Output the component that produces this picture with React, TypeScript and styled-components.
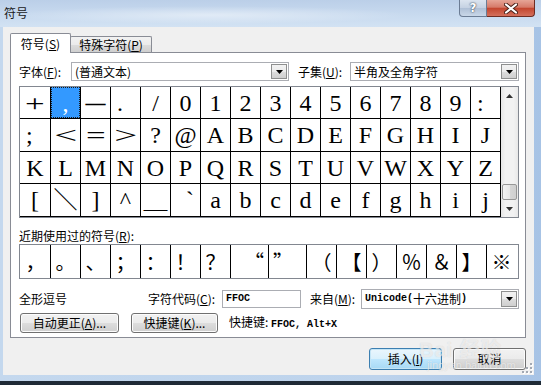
import type { ReactNode } from "react";
import styled, { createGlobalStyle } from "styled-components";

type Align = "left" | "center" | "right";

const gridRows: string[][] = [
  ["+", ",", "—", ".", "/", ..."0123456789".split(""), ":"],
  [";", "<", "=", ">", "?", "@", ..."ABCDEFGHIJ".split("")],
  "KLMNOPQRSTUVWXYZ".split(""),
  ["[", "＼", "]", "^", "＿", "`", ..."abcdefghij".split("")],
];

const leftChars = [".", ":", ";"];
const rightChars = ["`"];
// full-width look for a few half-width glyphs
const stretch: Record<string, number> = { "+": 1.45, "<": 1.7, "=": 1.45, ">": 1.7 };

const recent: { ch: string; align?: Align }[] = [
  { ch: "，" },
  { ch: "。" },
  { ch: "、" },
  { ch: "；" },
  { ch: "：" },
  { ch: "！" },
  { ch: "？" },
  { ch: "“", align: "right" },
  { ch: "”", align: "left" },
  { ch: "（" },
  { ch: "【" },
  { ch: "）" },
  { ch: "％" },
  { ch: "＆" },
  { ch: "】" },
  { ch: "※" },
];

const alignOf = (ch: string): Align =>
  leftChars.includes(ch) ? "left" : rightChars.includes(ch) ? "right" : "center";

export default function App() {
  return (
    <>
      <GlobalStyle />
      <Window>
        <TitleBar>
          <TitleText>符号</TitleText>
          <CaptionButtons>
            <HelpButton>?</HelpButton>
            <CloseButton>
              <svg width="14" height="11" viewBox="0 0 14 11">
                <path d="M2 1.5l10 8M12 1.5l-10 8" stroke="#4a2119" strokeWidth="4" strokeLinecap="round" />
                <path d="M2 1.5l10 8M12 1.5l-10 8" stroke="#fff" strokeWidth="2.2" strokeLinecap="round" />
              </svg>
            </CloseButton>
          </CaptionButtons>
        </TitleBar>

        <Body>
          <Client>
            <TabRow>
              <Tab $active>
                符号(<u>S</u>)
              </Tab>
              <Tab>
                特殊字符(<u>P</u>)
              </Tab>
            </TabRow>

            <TabPanel>
              <FieldRow>
                <Label $w={52}>
                  字体(<u>F</u>):
                </Label>
                <Combo width={218} value="(普通文本)" />
                <Label $w={52} $ml={9}>
                  子集(<u>U</u>):
                </Label>
                <Combo value="半角及全角字符" />
              </FieldRow>

              <SymbolBox>
                <CellGrid>
                  {gridRows.flatMap((row, r) =>
                    row.map((ch, c) => (
                      <Cell
                        key={`${r}-${c}`}
                        $align={alignOf(ch)}
                        $selected={r === 0 && c === 1}
                        $bold={ch === "—"}
                      >
                        <Glyph $sx={stretch[ch] ?? 1}>{ch}</Glyph>
                      </Cell>
                    ))
                  )}
                </CellGrid>
                <ScrollBar>
                  <ScrollArrow>
                    <svg width="7" height="4" viewBox="0 0 7 4">
                      <path d="M0 4h7L3.5 0z" fill="#333" />
                    </svg>
                  </ScrollArrow>
                  <ScrollTrack />
                  <ScrollThumb />
                  <ScrollArrow>
                    <svg width="7" height="4" viewBox="0 0 7 4">
                      <path d="M0 0h7L3.5 4z" fill="#333" />
                    </svg>
                  </ScrollArrow>
                </ScrollBar>
              </SymbolBox>

              <SectionLabel>
                近期使用过的符号(<u>R</u>):
              </SectionLabel>
              <RecentRow>
                {recent.map((s, i) => (
                  <RecentCell key={i} $align={s.align ?? "center"} $last={i === recent.length - 1}>
                    {s.ch}
                  </RecentCell>
                ))}
              </RecentRow>

              <InfoRow>
                <Label $w={129}>全形逗号</Label>
                <Label $w={74}>
                  字符代码(<u>C</u>):
                </Label>
                <TextInput>
                  <Mono>FFOC</Mono>
                </TextInput>
                <Label $w={51} $ml={9}>
                  来自(<u>M</u>):
                </Label>
                <Combo
                  height={20}
                  value={
                    <>
                      <Mono>Unicode(</Mono>十六进制<Mono>)</Mono>
                    </>
                  }
                />
              </InfoRow>

              <ActionRow>
                <PushButton $w={99} $h={20}>
                  自动更正(<u>A</u>)...
                </PushButton>
                <PushButton $w={87} $h={20} $ml={12}>
                  快捷键(<u>K</u>)...
                </PushButton>
                <ShortcutText>
                  快捷键: <Mono>FFOC, Alt+X</Mono>
                </ShortcutText>
              </ActionRow>
            </TabPanel>

            <DialogButtons>
              <PushButton $w={73} $h={22} $primary>
                插入(<u>I</u>)
              </PushButton>
              <PushButton $w={73} $h={22}>
                取消
              </PushButton>
            </DialogButtons>

            <Watermark>
              <WatermarkLogo>Bai 经验</WatermarkLogo>
              <WatermarkUrl>jingyan.baidu.com</WatermarkUrl>
            </Watermark>

            <ResizeGrip>
              <svg width="11" height="11" viewBox="0 0 11 11">
                {[
                  [9, 1],
                  [9, 5],
                  [5, 5],
                  [9, 9],
                  [5, 9],
                  [1, 9],
                ].map(([x, y], i) => (
                  <g key={i}>
                    <rect x={x} y={y} width="2" height="2" fill="#fff" />
                    <rect x={x - 1} y={y - 1} width="2" height="2" fill="#a3a9b3" />
                  </g>
                ))}
              </svg>
            </ResizeGrip>
          </Client>
        </Body>
        <BottomFrame />
        <Taskbar />
      </Window>
    </>
  );
}

function Combo({ value, width, height = 19 }: { value: ReactNode; width?: number; height?: number }) {
  return (
    <ComboBox $w={width} $h={height}>
      <ComboText>{value}</ComboText>
      <DropButton>
        <svg width="7" height="4" viewBox="0 0 7 4">
          <path d="M0 0h7L3.5 4z" fill="#000" />
        </svg>
      </DropButton>
    </ComboBox>
  );
}

// styles

const GlobalStyle = createGlobalStyle`
  html, body {
    margin: 0;
    padding: 0;
  }
  body {
    background: #1d2733;
    font-family: "Noto Sans CJK SC", "Liberation Sans", sans-serif;
    font-size: 12px;
    color: #000;
  }
  u {
    text-decoration-thickness: 1px;
    text-underline-offset: 1px;
  }
`;

const Window = styled.div`
  width: 541px;
  height: 385px;
  display: flex;
  flex-direction: column;
  overflow: hidden;
  background: linear-gradient(to right, #c4d8ee 0%, #bdd3ec 70%, #a7c3e5 100%);
`;

const TitleBar = styled.div`
  height: 27px;
  flex-shrink: 0;
  display: flex;
  align-items: flex-start;
  background:
    radial-gradient(ellipse 200px 9px at 210px 15px, rgba(255, 255, 255, 0.45), rgba(255, 255, 255, 0)),
    linear-gradient(180deg, #bbcfe8 0%, #c8daef 55%, #d2e2f3 100%);
`;

const TitleText = styled.span`
  padding: 6px 0 0 4px;
  line-height: 14px;
  font-size: 12px;
  color: #1a1a1a;
`;

const CaptionButtons = styled.div`
  margin-left: auto;
  margin-right: 6px;
  display: flex;
  height: 17px;
`;

const HelpButton = styled.div`
  width: 28px;
  height: 17px;
  box-sizing: border-box;
  border: 1px solid #6b7c94;
  border-top: none;
  border-radius: 0 0 0 4px;
  background: linear-gradient(180deg, #dbe4ef 0%, #c4d1e2 50%, #afc0d6 52%, #c9d7e8 100%);
  display: flex;
  align-items: center;
  justify-content: center;
  font-family: "DejaVu Sans", sans-serif;
  font-weight: bold;
  font-size: 12px;
  color: #fff;
  text-shadow: 0 0 2px #3d4a5c, 0 0 1px #3d4a5c;
`;

const CloseButton = styled.div`
  width: 48px;
  height: 17px;
  box-sizing: border-box;
  border: 1px solid #6e2c22;
  border-top: none;
  border-left: none;
  border-radius: 0 0 4px 0;
  background: linear-gradient(180deg, #e6a597 0%, #d67a69 45%, #c3462f 52%, #d4705c 100%);
  display: flex;
  align-items: center;
  justify-content: center;
`;

const Body = styled.div`
  height: 348px;
  display: flex;
  padding: 0 8px 0 3px;
`;

const Client = styled.div`
  flex: 1;
  position: relative;
  box-sizing: border-box;
  background: #f0f0f0;
  padding: 6px 8px 0 7px;
  display: flex;
  flex-direction: column;
`;

const TabRow = styled.div`
  height: 19px;
  display: flex;
  align-items: flex-end;
`;

const Tab = styled.div<{ $active?: boolean }>`
  position: relative;
  z-index: ${(p) => (p.$active ? 2 : 1)};
  box-sizing: border-box;
  height: ${(p) => (p.$active ? 20 : 16)}px;
  width: ${(p) => (p.$active ? 61 : 82)}px;
  margin-bottom: ${(p) => (p.$active ? -1 : 0)}px;
  margin-left: ${(p) => (p.$active ? 0 : -1)}px;
  border: 1px solid #898c95;
  border-bottom: none;
  border-radius: 2px 2px 0 0;
  background: ${(p) => (p.$active ? "#fff" : "linear-gradient(180deg, #f2f2f2 0%, #ebebeb 50%, #dddddd 51%, #cfcfcf 100%)")};
  display: flex;
  align-items: center;
  justify-content: center;
  padding-top: ${(p) => (p.$active ? 0 : 1)}px;
  line-height: 1;
`;

const TabPanel = styled.div`
  height: 286px;
  box-sizing: border-box;
  border: 1px solid #898c95;
  background: #fff;
  padding: 9px 6px 0 8px;
  display: flex;
  flex-direction: column;
`;

const FieldRow = styled.div`
  height: 19px;
  display: flex;
  align-items: center;
`;

const Label = styled.span<{ $w?: number; $ml?: number }>`
  flex-shrink: 0;
  width: ${(p) => (p.$w ? `${p.$w}px` : "auto")};
  margin-left: ${(p) => p.$ml ?? 0}px;
  line-height: 1;
  white-space: nowrap;
`;

const ComboBox = styled.div<{ $w?: number; $h: number }>`
  box-sizing: border-box;
  height: ${(p) => p.$h}px;
  width: ${(p) => (p.$w ? `${p.$w}px` : "auto")};
  flex: ${(p) => (p.$w ? "none" : "1")};
  border: 1px solid #abadb3;
  background: #fff;
  padding: 1px;
  display: flex;
  align-items: stretch;
`;

const ComboText = styled.span`
  flex: 1;
  display: flex;
  align-items: center;
  padding-left: 2px;
  line-height: 1;
  white-space: nowrap;
`;

const DropButton = styled.span`
  width: 16px;
  box-sizing: border-box;
  border: 1px solid #8e8f8f;
  background: linear-gradient(180deg, #f2f2f2 0%, #ebebeb 50%, #dddddd 51%, #cfcfcf 100%);
  display: flex;
  align-items: center;
  justify-content: center;
`;

const SymbolBox = styled.div`
  margin-top: 5px;
  align-self: flex-start;
  display: flex;
  border: 1px solid #828790;
`;

const CellGrid = styled.div`
  display: grid;
  grid-template-columns: 30px repeat(15, 29px);
  grid-template-rows: 31px 32px 31px 32px;
  gap: 1px;
  padding: 0 1px 1px 0;
  background: #000;
`;

const Cell = styled.div<{ $align: Align; $selected?: boolean; $bold?: boolean }>`
  display: flex;
  align-items: center;
  justify-content: ${(p) => (p.$align === "left" ? "flex-start" : p.$align === "right" ? "flex-end" : "center")};
  padding: 0 ${(p) => (p.$align === "center" ? 0 : 6)}px;
  background: ${(p) => (p.$selected ? "#3399ff" : "#fff")};
  color: ${(p) => (p.$selected ? "#fff" : "#000")};
  outline: ${(p) => (p.$selected ? "1px dotted #1a1a1a" : "none")};
  outline-offset: -1px;
  font-family: "Liberation Serif", "Noto Sans CJK SC", serif;
  font-size: ${(p) => (p.$bold ? 20 : 24)}px;
  font-weight: ${(p) => (p.$bold ? 700 : 400)};
  line-height: 1;
`;

const Glyph = styled.span<{ $sx: number }>`
  display: inline-block;
  transform: scaleX(${(p) => p.$sx});
`;

const ScrollBar = styled.div`
  width: 17px;
  display: flex;
  flex-direction: column;
  background: linear-gradient(to right, #e6e6e6 0%, #f2f2f2 25%, #f2f2f2 75%, #e8e8e8 100%);
`;

const ScrollArrow = styled.div`
  height: 17px;
  display: flex;
  align-items: center;
  justify-content: center;
`;

const ScrollTrack = styled.div`
  flex: 1;
`;

const ScrollThumb = styled.div`
  height: 16px;
  margin: 0 1px 0 1px;
  border: 1px solid #979797;
  border-radius: 2px;
  box-sizing: border-box;
  background: linear-gradient(to right, #f3f3f3 0%, #e8e8e8 50%, #d6d6d6 51%, #cfcfcf 100%);
`;

const SectionLabel = styled.div`
  margin-top: 10px;
  height: 16px;
  line-height: 16px;
  white-space: nowrap;
`;

const RecentRow = styled.div`
  align-self: flex-start;
  height: 35px;
  box-sizing: border-box;
  border: 1px solid #828790;
  padding: 0 2px 0 1px;
  display: flex;
  background: #fff;
`;

const RecentCell = styled.div<{ $align: Align; $last?: boolean }>`
  width: 29px;
  border-right: ${(p) => (p.$last ? "none" : "1px solid #000")};
  display: flex;
  align-items: center;
  justify-content: ${(p) => (p.$align === "left" ? "flex-start" : p.$align === "right" ? "flex-end" : "center")};
  padding: 0 ${(p) => (p.$align === "center" ? 0 : 4)}px;
  font-family: "Noto Sans CJK SC", "Liberation Serif", serif;
  font-size: 20px;
  line-height: 1;
`;

const InfoRow = styled.div`
  margin-top: 10px;
  height: 20px;
  display: flex;
  align-items: center;
`;

const TextInput = styled.div`
  width: 79px;
  height: 18px;
  box-sizing: border-box;
  border: 1px solid #abadb3;
  background: #fff;
  display: flex;
  align-items: center;
  padding-left: 3px;
`;

const Mono = styled.span`
  font-family: "Liberation Mono", "Noto Sans CJK SC", monospace;
  font-size: 10px;
  font-weight: 600;
  line-height: 1;
`;

const ActionRow = styled.div`
  margin-top: 4px;
  height: 20px;
  display: flex;
  align-items: center;
`;

const PushButton = styled.div<{ $w: number; $h: number; $ml?: number; $primary?: boolean }>`
  position: relative;
  z-index: 1;
  width: ${(p) => p.$w}px;
  height: ${(p) => p.$h}px;
  margin-left: ${(p) => p.$ml ?? 1}px;
  box-sizing: border-box;
  border: 1px solid ${(p) => (p.$primary ? "#3c7fb1" : "#707070")};
  border-radius: 3px;
  box-shadow: inset 0 0 0 1px ${(p) => (p.$primary ? "#c4e5f6" : "#fcfcfc")};
  background: ${(p) =>
    p.$primary
      ? "linear-gradient(180deg, #eaf6fd 0%, #d9f0fc 50%, #bee6fd 51%, #a7d9f5 100%)"
      : "linear-gradient(180deg, #f2f2f2 0%, #ebebeb 50%, #dddddd 51%, #cfcfcf 100%)"};
  display: flex;
  align-items: center;
  justify-content: center;
  line-height: 1;
  white-space: nowrap;
`;

const ShortcutText = styled.span`
  margin-left: 11px;
  line-height: 1;
  white-space: nowrap;
`;

const DialogButtons = styled.div`
  margin-top: 10px;
  display: flex;
  justify-content: flex-end;
  gap: 10px;
`;

const Watermark = styled.div`
  position: absolute;
  z-index: 2;
  left: 416px;
  top: 313px;
  display: flex;
  flex-direction: column;
  align-items: flex-start;
  pointer-events: none;
  color: rgba(255, 255, 255, 0.6);
  text-shadow: 0 0 1px rgba(120, 120, 120, 0.3);
`;

const WatermarkLogo = styled.span`
  font-family: "Liberation Sans", "Noto Sans CJK SC", sans-serif;
  font-size: 20px;
  font-weight: 700;
  line-height: 1;
  letter-spacing: 1px;
`;

const WatermarkUrl = styled.span`
  margin-left: 8px;
  font-family: "Liberation Sans", sans-serif;
  font-size: 11px;
  line-height: 1;
`;

const ResizeGrip = styled.div`
  position: absolute;
  right: 1px;
  bottom: 1px;
  width: 11px;
  height: 11px;
  display: flex;
`;

const BottomFrame = styled.div`
  height: 6px;
`;

const Taskbar = styled.div`
  height: 4px;
  background: #1f2a36;
`;
